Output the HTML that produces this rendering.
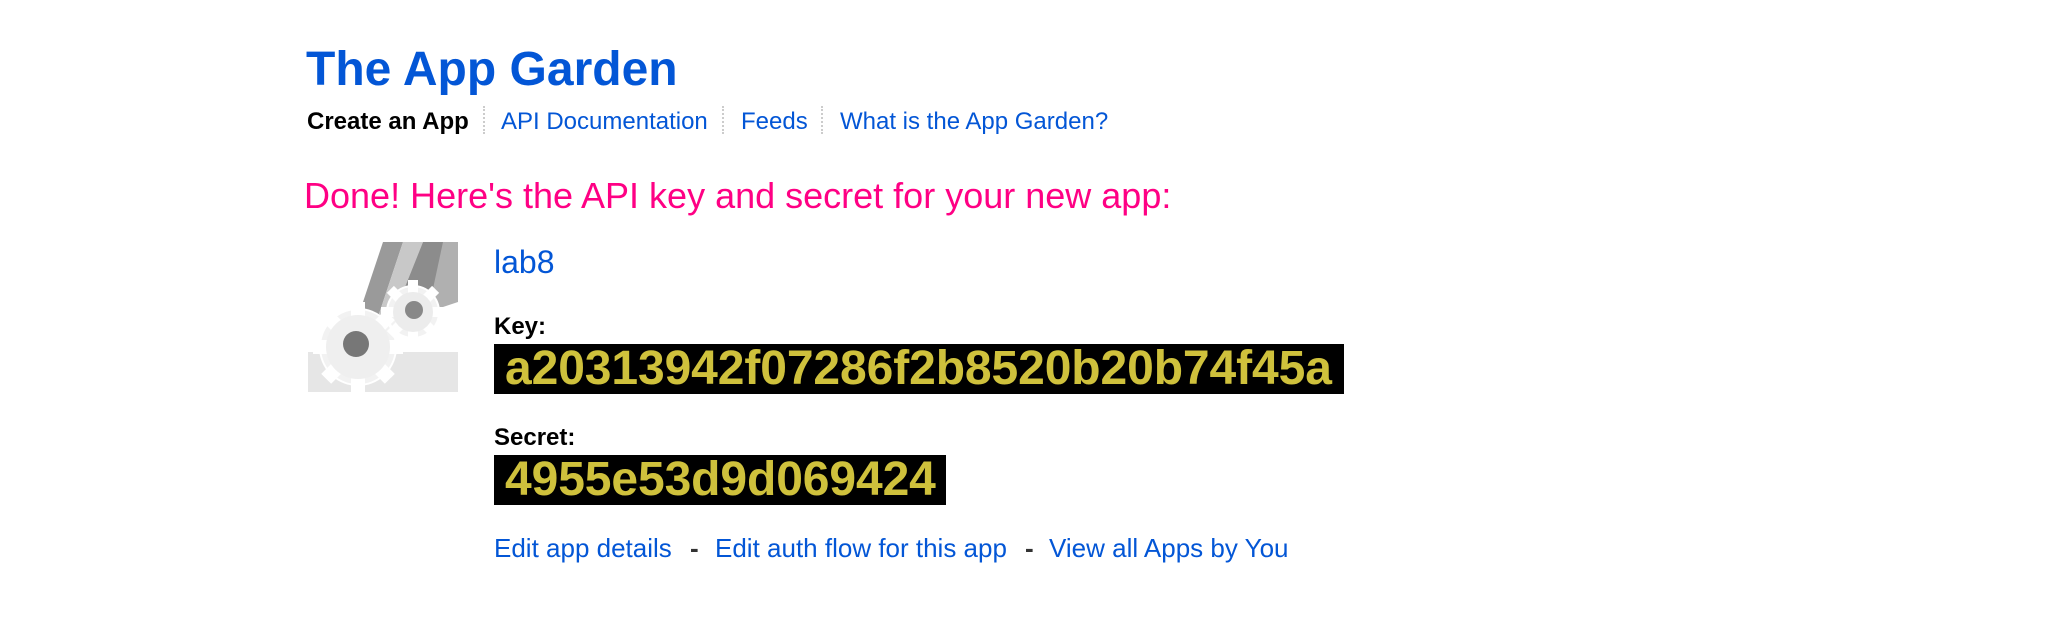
<!DOCTYPE html>
<html><head><meta charset="utf-8"><style>
body{margin:0;width:2072px;height:622px;background:#fff;font-family:"Liberation Sans",Arial,sans-serif;position:relative;overflow:hidden}
.a{position:absolute;white-space:nowrap;line-height:1}
a{color:#0356d6;text-decoration:none}
.sep{position:absolute;top:106px;height:28px;border-left:2px dotted #ccc}
.box{position:absolute;background:#000;color:#cfc13c;font-weight:bold;font-size:48px;line-height:50px;padding-left:11px;box-sizing:border-box;letter-spacing:-0.1px}
</style></head><body>
<div class="a" style="left:306px;top:46px;font-size:48px;font-weight:bold;color:#0356d6">The App Garden</div>
<div class="a" style="left:307px;top:110px;font-size:24px;font-weight:bold;color:#000">Create an App</div>
<div class="sep" style="left:483px"></div>
<div class="a" style="left:501px;top:110px;font-size:24px"><a>API Documentation</a></div>
<div class="sep" style="left:722px"></div>
<div class="a" style="left:741px;top:110px;font-size:24px"><a>Feeds</a></div>
<div class="sep" style="left:821px"></div>
<div class="a" style="left:840px;top:110px;font-size:24px"><a>What is the App Garden?</a></div>
<div class="a" style="left:304px;top:178px;font-size:36px;color:#ff0084">Done! Here's the API key and secret for your new app:</div>
<svg class="a" style="left:308px;top:242px" width="150" height="150" viewBox="0 0 150 150">
<rect x="0" y="110" width="150" height="40" fill="#e6e6e6"/>
<path d="M75 0 L95 0 L70 75 L50 75Z" fill="#9a9a9a"/>
<path d="M95 0 L115 0 L85 75 L70 75Z" fill="#c8c8c8"/>
<path d="M115 0 L150 0 L150 30 L110 60 L85 75Z" fill="#8c8c8c"/>
<path d="M135 0 L150 0 L150 60 L120 70Z" fill="#b0b0b0"/>
<g fill="#f2f2f2" stroke="#fff" stroke-width="2">
<circle cx="105" cy="70" r="26"/><circle cx="50" cy="105" r="38"/>
</g>
<g fill="#fff">
<g transform="translate(105 70)"><rect x="-5" y="-32" width="10" height="64"/><rect x="-32" y="-5" width="64" height="10"/><rect x="-5" y="-32" width="10" height="64" transform="rotate(45)"/><rect x="-5" y="-32" width="10" height="64" transform="rotate(-45)"/></g>
<g transform="translate(50 105)"><rect x="-7" y="-45" width="14" height="90"/><rect x="-45" y="-7" width="90" height="14"/><rect x="-7" y="-45" width="14" height="90" transform="rotate(45)"/><rect x="-7" y="-45" width="14" height="90" transform="rotate(-45)"/></g>
</g>
<circle cx="50" cy="105" r="32" fill="#efefef"/>
<circle cx="105" cy="70" r="20" fill="#ececec"/>
<circle cx="48" cy="102" r="13" fill="#777"/>
<circle cx="106" cy="68" r="9" fill="#888"/>
</svg>
<div class="a" style="left:494px;top:246px;font-size:32px"><a>lab8</a></div>
<div class="a" style="left:494px;top:315px;font-size:24px;font-weight:bold;color:#000">Key:</div>
<div class="box" style="left:494px;top:344px;width:850px;height:50px">a20313942f07286f2b8520b20b74f45a</div>
<div class="a" style="left:494px;top:426px;font-size:24px;font-weight:bold;color:#000">Secret:</div>
<div class="box" style="left:494px;top:455px;width:452px;height:50px">4955e53d9d069424</div>
<div class="a" style="left:494px;top:535px;font-size:26px"><a>Edit app details</a></div>
<div class="a" style="left:690px;top:535px;font-size:26px;color:#333;font-weight:bold">-</div>
<div class="a" style="left:715px;top:535px;font-size:26px"><a>Edit auth flow for this app</a></div>
<div class="a" style="left:1025px;top:535px;font-size:26px;color:#333;font-weight:bold">-</div>
<div class="a" style="left:1049px;top:535px;font-size:26px"><a>View all Apps by You</a></div>
</body></html>
